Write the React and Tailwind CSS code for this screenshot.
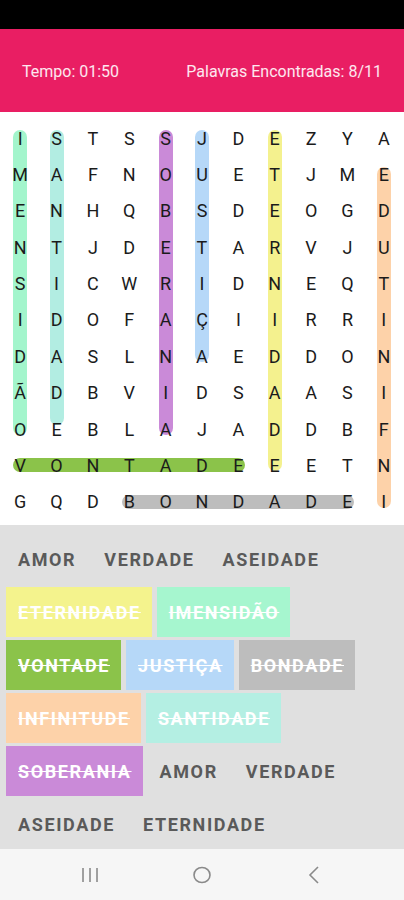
import React from "react";

const GRID = [
  "ISTSSJDEZYA",
  "MAFNOUETJME",
  "ENHQBSDEOGD",
  "NTJDETARVJU",
  "SICWRIDNEQT",
  "IDOFAÇIIRRI",
  "DASLNAEDDON",
  "ÃDBVIDSAASI",
  "OEBLAJADDBF",
  "VONTADEEETN",
  "GQDBONDADEI",
];

const CELL = 400 / 11;

// found words drawn over the grid: [row, col] start -> end
const MARKS = [
  { from: [0, 0], to: [8, 0], color: "#a3f5cc" },
  { from: [0, 1], to: [8, 1], color: "#b2ede2", endPad: -10 },
  { from: [0, 4], to: [8, 4], color: "#ca8ad8" },
  { from: [0, 5], to: [6, 5], color: "#b6d8f8" },
  { from: [0, 7], to: [9, 7], color: "#f4f18e" },
  { from: [1, 10], to: [10, 10], color: "#fdd2a9" },
  { from: [9, 0], to: [9, 6], color: "#8bc34a" },
  { from: [10, 3], to: [10, 9], color: "#bdbdbd" },
];

const WORDS = [
  { w: "AMOR" },
  { w: "VERDADE" },
  { w: "ASEIDADE" },
  { w: "ETERNIDADE", bg: "bg-[#f4f38d]" },
  { w: "IMENSIDÃO", bg: "bg-[#a6f6cf]" },
  { w: "VONTADE", bg: "bg-[#8bc34a]" },
  { w: "JUSTIÇA", bg: "bg-[#b6d8f8]" },
  { w: "BONDADE", bg: "bg-[#bdbdbd]" },
  { w: "INFINITUDE", bg: "bg-[#fdd2a9]" },
  { w: "SANTIDADE", bg: "bg-[#b4efe3]" },
  { w: "SOBERANIA", bg: "bg-[#ca8ad8]" },
  { w: "AMOR" },
  { w: "VERDADE" },
  { w: "ASEIDADE" },
  { w: "ETERNIDADE" },
];

const markStyle = ({ from, to, color, endPad = 0 }) => {
  const half = 7;
  const x1 = CELL * (from[1] + 0.5);
  const y1 = CELL * (from[0] + 0.5);
  const x2 = CELL * (to[1] + 0.5);
  const y2 = CELL * (to[0] + 0.5);
  const vertical = from[1] === to[1];
  return {
    left: x1 - half,
    top: y1 - half - (vertical ? 1 : 0),
    width: vertical ? half * 2 : x2 - x1 + half * 2,
    height: vertical ? y2 - y1 + half * 2 + endPad : half * 2,
    background: color,
  };
};

const App = () => {
  return (
    <div className="flex h-[900px] w-[404px] flex-col bg-white font-['Roboto','Liberation_Sans',sans-serif]">
      <div className="h-[29px] bg-black" />

      <header className="flex h-[83px] items-center justify-between bg-[#e91e63] pl-[22px] pr-[22px] pt-[3px] text-[16px] text-white/90">
        <span>Tempo: 01:50</span>
        <span>Palavras Encontradas: 8/11</span>
      </header>

      <div className="h-[413px] px-[2px] pt-[8px]">
        <div className="relative h-[400px] w-[400px]">
          {MARKS.map((m, i) => (
            <div key={i} className="absolute rounded-full" style={markStyle(m)} />
          ))}
          <div className="relative grid h-[400px] w-[400px] grid-cols-11 grid-rows-11">
            {GRID.map((row, r) =>
              row.split("").map((ch, c) => (
                <div
                  key={r + "-" + c}
                  className="flex items-center justify-center text-[18px] text-[#1b1b1b]"
                >
                  {ch}
                </div>
              ))
            )}
          </div>
        </div>
      </div>

      <div className="flex h-[324px] flex-wrap content-start gap-x-[5px] gap-y-[3px] bg-[#e0e0e0] px-[6px] pt-[9px]">
        {WORDS.map((item, i) => (
          <div
            key={i}
            className={
              "flex h-[50px] items-center pl-[12px] pr-[11px] text-[18px] font-bold tracking-[0.09em] " +
              (item.bg
                ? item.bg + " text-white line-through decoration-white"
                : "text-[#5a5a5a]")
            }
          >
            {item.w}
          </div>
        ))}
      </div>

      <nav className="grid h-[51px] grid-cols-3 items-center justify-items-center bg-[#f6f6f6] px-[34px] text-[#8a8a8a]">
        <svg width="18" height="16" viewBox="0 0 18 16" fill="none" stroke="currentColor" strokeWidth="1.6">
          <path d="M2 1v14M9 1v14M16 1v14" />
        </svg>
        <svg width="20" height="18" viewBox="0 0 20 18" fill="none" stroke="currentColor" strokeWidth="1.6">
          <ellipse cx="10" cy="9" rx="8" ry="7.5" />
        </svg>
        <svg width="12" height="18" viewBox="0 0 12 18" fill="none" stroke="currentColor" strokeWidth="1.6">
          <path d="M10 1L2 9l8 8" />
        </svg>
      </nav>
    </div>
  );
};

export default App;
